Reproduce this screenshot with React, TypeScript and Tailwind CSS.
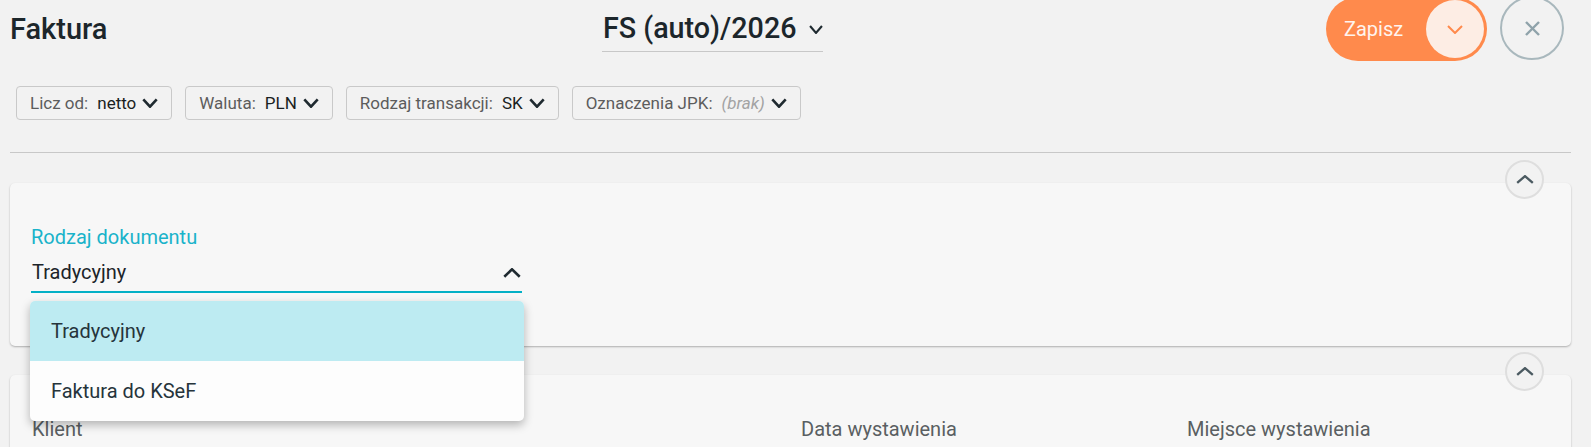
import React from "react";

const Chevron = ({ up = false, className = "", w = 16, h = 10, stroke = "#1f2a30", sw = 2.5 }) => (
  <svg width={w} height={h} viewBox={`0 0 ${w} ${h}`} className={className} fill="none">
    {up ? (
      <polyline
        points={`${sw / 2},${h - sw / 2} ${w / 2},${sw / 2} ${w - sw / 2},${h - sw / 2}`}
        stroke={stroke}
        strokeWidth={sw}
        strokeLinecap="butt"
        strokeLinejoin="miter"
      />
    ) : (
      <polyline
        points={`${sw / 2},${sw / 2} ${w / 2},${h - sw / 2} ${w - sw / 2},${sw / 2}`}
        stroke={stroke}
        strokeWidth={sw}
        strokeLinecap="butt"
        strokeLinejoin="miter"
      />
    )}
  </svg>
);

const Chip = ({ label, value, muted = false }) => (
  <div className="flex h-[34px] items-center rounded-[4px] border border-[#c9c9c9] pl-[13px] pr-[13px] text-[17px] leading-none">
    <span className="text-[#5c5c5c]">{label}</span>
    <span className={muted ? "ml-[9px] italic text-[#a3a3a3]" : "ml-[9px] text-[#1a1f22]"}>{value}</span>
    <Chevron className="ml-[6px]" w={16} h={10} sw={2.6} />
  </div>
);

const CollapseButton = () => (
  <div className="absolute right-[27px] top-[-23px] flex h-[39px] w-[39px] items-center justify-center rounded-full border-2 border-[#dedede] bg-[#f2f2f2]">
    <Chevron up w={18} h={9} sw={2.4} stroke="#4b5a61" />
  </div>
);

export default function App() {
  return (
    <div className="min-h-screen overflow-hidden bg-[#f2f2f2] pl-[10px] pr-[20px] font-['Roboto',sans-serif] text-[#1c262b]">
      {/* header */}
      <div className="-mt-[3px] flex h-[64px] items-start pr-[7px]">
        <h1 className="mt-[18px] text-[29px] font-medium leading-[28px]">Faktura</h1>
        <div className="flex flex-1 justify-center">
          <div className="mr-[9px] mt-[17px] flex items-center border-b border-[#c8c8c8] pb-[9px] pl-[1px]">
            <span className="text-[28.7px] font-medium leading-[28px]">FS (auto)/2026</span>
            <Chevron className="ml-[12px] mt-[2px]" w={14} h={9} sw={2.1} />
          </div>
        </div>
        <div className="flex items-start">
          <div className="flex h-[64px] w-[161px] items-center rounded-full bg-[#ff8a4c] pl-[18px] pr-[3px]">
            <span className="text-[20px] leading-none text-[#fff4ee]">Zapisz</span>
            <div className="ml-auto flex h-[58px] w-[58px] items-center justify-center rounded-full bg-[#fdede4]">
              <Chevron w={16} h={9} sw={2} stroke="#ff8a4c" />
            </div>
          </div>
          <div className="-mt-[1px] ml-[13px] flex h-[64px] w-[64px] items-center justify-center rounded-full border-2 border-[#a9b8bd]">
            <svg width="15" height="15" viewBox="0 0 15 15">
              <line x1="1" y1="1" x2="14" y2="14" stroke="#8fa2aa" strokeWidth="2.4" />
              <line x1="14" y1="1" x2="1" y2="14" stroke="#8fa2aa" strokeWidth="2.4" />
            </svg>
          </div>
        </div>
      </div>

      {/* chips */}
      <div className="mt-[25px] flex gap-[13px] pl-[6px]">
        <Chip label="Licz od:" value="netto" />
        <Chip label="Waluta:" value="PLN" />
        <Chip label="Rodzaj transakcji:" value="SK" />
        <Chip label="Oznaczenia JPK:" value="(brak)" muted />
      </div>

      <div className="mt-[32px] h-px bg-[#c8c8c8]" />

      {/* card 1 */}
      <div className="relative mt-[30px] rounded-[5px] bg-[#f7f7f7] pb-[53px] pl-[21px] pt-[42px] shadow-[0_1px_2px_rgba(0,0,0,0.28)]">
        <CollapseButton />
        <div className="relative w-[491px]">
          <div className="text-[20px] leading-[24px] text-[#1ab3ca]">Rodzaj dokumentu</div>
          <div className="mt-[11px] flex items-center border-b-2 border-[#03b0c6] pb-[7px] pl-[1px]">
            <span className="text-[20px] leading-[24px] text-[#1c2429]">Tradycyjny</span>
            <Chevron up className="ml-auto mr-[1px] mt-[1px]" w={18} h={10} sw={2.6} />
          </div>
          <div className="absolute left-[-1px] top-[76px] z-10 w-[494px] overflow-hidden rounded-[5px] bg-[#fdfdfd] shadow-[0_4px_10px_rgba(0,0,0,0.28)]">
            <div className="flex h-[60px] items-center bg-[#bdebf2] pl-[21px] text-[20px] text-[#26343b]">Tradycyjny</div>
            <div className="flex h-[60px] items-center pl-[21px] text-[20px] text-[#26343b]">Faktura do KSeF</div>
          </div>
        </div>
      </div>

      {/* card 2 */}
      <div className="relative mt-[29px] h-[120px] rounded-[5px] bg-[#f7f7f7] pl-[22px] pt-[42px] shadow-[0_1px_2px_rgba(0,0,0,0.28)]">
        <CollapseButton />
        <div className="grid grid-cols-[769px_386px_1fr] text-[20px] leading-[24px] text-[#5a5f62]">
          <div>Klient</div>
          <div>Data wystawienia</div>
          <div>Miejsce wystawienia</div>
        </div>
      </div>
    </div>
  );
}
